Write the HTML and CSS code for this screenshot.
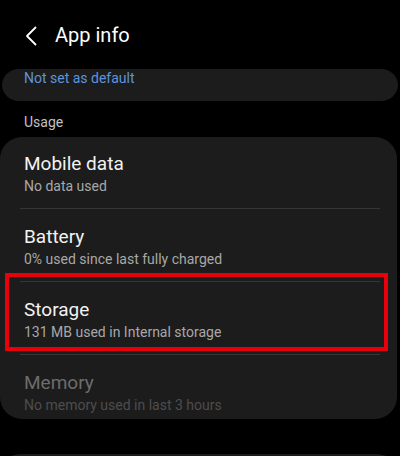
FILE: index.html
```html
<!DOCTYPE html>
<html lang="en">
<head>
<meta charset="utf-8">
<title>App info</title>
<link rel="stylesheet" href="styles.css">
</head>
<body>
<header class="appbar">
  <svg class="back" width="14" height="20" viewBox="0 0 14 20" aria-hidden="true">
    <path d="M11.5 1.5 L3 10 L11.5 18.5" fill="none" stroke="#ffffff" stroke-width="1.8" stroke-linecap="round" stroke-linejoin="round"/>
  </svg>
  <h1 class="title">App info</h1>
</header>

<div class="default-card">Not set as default</div>

<div class="section-label">Usage</div>

<section class="card">
  <div class="row">
    <div class="row-title">Mobile data</div>
    <div class="row-sub">No data used</div>
  </div>
  <div class="row">
    <div class="row-title">Battery</div>
    <div class="row-sub">0% used since last fully charged</div>
  </div>
  <div class="row highlighted">
    <div class="row-title">Storage</div>
    <div class="row-sub">131 MB used in Internal storage</div>
    <span class="highlight-box"></span>
  </div>
  <div class="row disabled">
    <div class="row-title">Memory</div>
    <div class="row-sub">No memory used in last 3 hours</div>
  </div>
</section>

<section class="card next-card"></section>
</body>
</html>
```

FILE: styles.css
```css
html, body {
  margin: 0;
  padding: 0;
  background: #000000;
  height: 456px;
  overflow: hidden;
  font-family: Roboto, "Noto Sans", sans-serif;
}

.appbar {
  display: flex;
  align-items: center;
  padding: 21px 0 20px 24px;
  height: 28px;
}

.back {
  display: block;
  margin-right: 17px;
  margin-top: 1px;
}

.title {
  margin: 0;
  font-size: 20px;
  font-weight: 400;
  line-height: 28px;
  color: #ffffff;
}

.default-card {
  margin: 0 2px 0 2px;
  height: 32px;
  box-sizing: border-box;
  padding: 0 22px;
  background: #1c1c1c;
  border-radius: 17px / 16px;
  color: #5f93de;
  font-size: 14px;
  line-height: 18px;
}

.section-label {
  margin: 11px 0 5px 24px;
  font-size: 14px;
  line-height: 20px;
  color: #c2c2c2;
}

.card {
  background: #1c1c1c;
  margin-right: 3px;
  border-radius: 22px;
}

.row {
  position: relative;
  margin: 0 17px 0 20px;
  padding: 16px 0 13px 4px;
  border-top: 1px solid #363636;
}

.row:first-child {
  border-top: none;
  padding-top: 14.5px;
}

.row-title {
  font-size: 19px;
  line-height: 24px;
  color: #f2f2f2;
}

.row-sub {
  margin-top: 1px;
  font-size: 14px;
  line-height: 18px;
  color: #a8a8a8;
}

.row.disabled .row-title {
  color: #6c6c6c;
}

.row.disabled .row-sub {
  color: #4d4d4d;
}

.row.disabled {
  padding-bottom: 5px;
}

.highlight-box {
  position: absolute;
  top: -9px;
  left: -15px;
  right: -8px;
  bottom: 3px;
  border: 4px solid #e8000b;
  pointer-events: none;
}

.next-card {
  margin-top: 35px;
  height: 40px;
}
```
